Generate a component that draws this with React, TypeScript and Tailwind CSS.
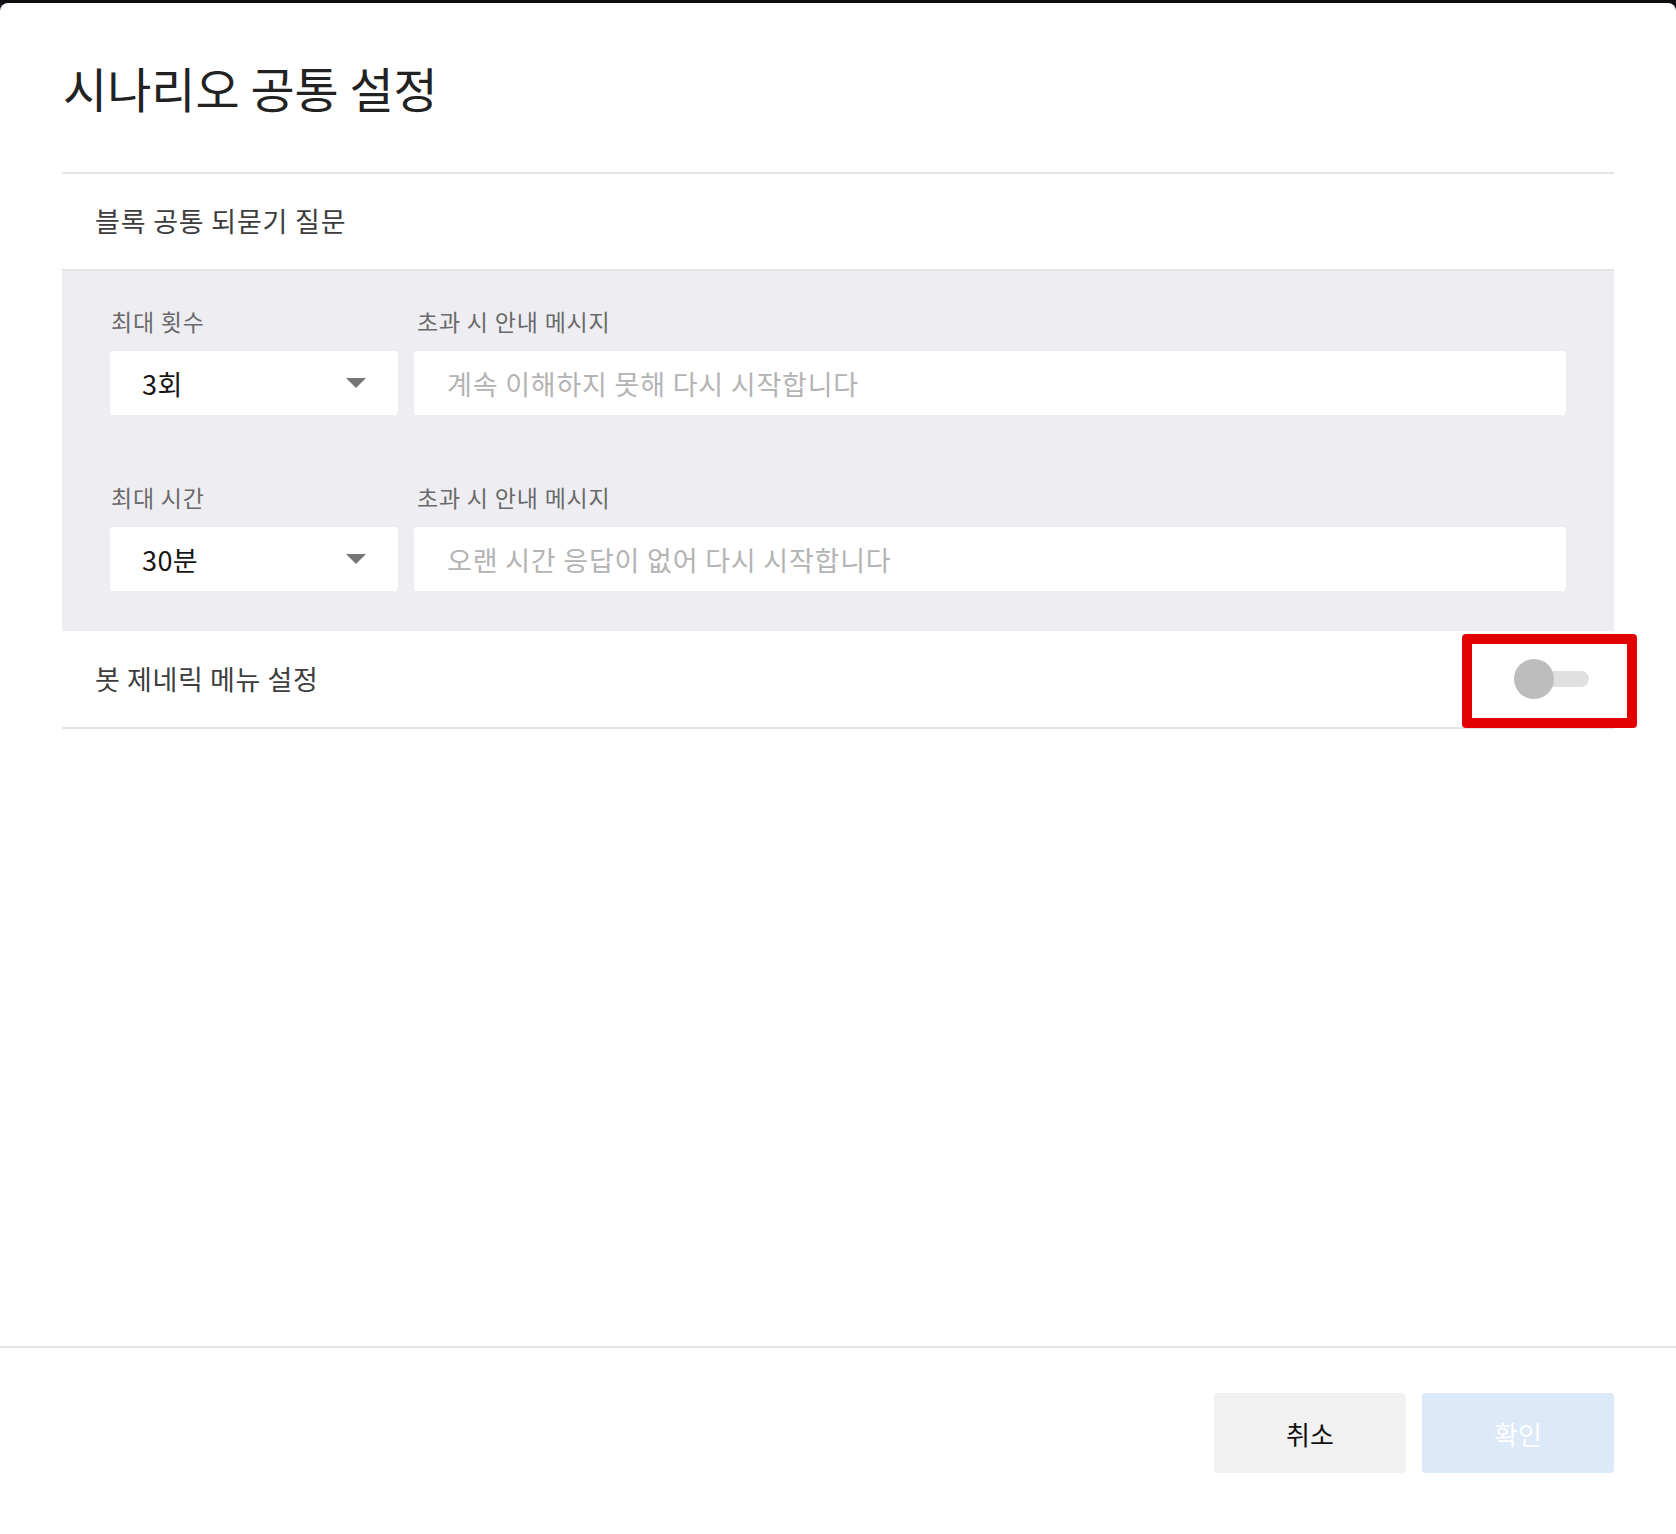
import { useState } from 'react'

function SelectBox({ value }: { value: string }) {
  return (
    <div className="flex h-[64px] items-center justify-between rounded-[4px] bg-white pl-[32px] pr-[32px]">
      <span className="text-[27px] leading-none tracking-[0.4px] text-[#151515]">{value}</span>
      <svg width="20" height="10" viewBox="0 0 20 10" className="block">
        <path d="M0 0 L20 0 L10 10 Z" fill="#767676" />
      </svg>
    </div>
  )
}

function MessageInput({ placeholder }: { placeholder: string }) {
  return (
    <input
      type="text"
      placeholder={placeholder}
      className="h-[64px] w-full rounded-[4px] bg-white pl-[33px] text-[27px] tracking-[0.8px] text-[#222] outline-none placeholder:text-[#b3b3b3]"
    />
  )
}

function LimitRow({ label, value, placeholder }: { label: string; value: string; placeholder: string }) {
  return (
    <div className="grid grid-cols-[288px_1fr] gap-x-[16px]">
      <div className="mb-[14px] pl-[1px] text-[23px] leading-[32px] tracking-[0.8px] text-[#6a6a6a]">{label}</div>
      <div className="mb-[14px] pl-[3px] text-[23px] leading-[32px] tracking-[0.8px] text-[#6a6a6a]">
        초과 시 안내 메시지
      </div>
      <SelectBox value={value} />
      <MessageInput placeholder={placeholder} />
    </div>
  )
}

export default function App() {
  const [menuOn, setMenuOn] = useState(false)

  return (
    <div className="relative min-h-[1534px] bg-[#0d0d12] pt-[3px] font-['Noto_Sans_CJK_KR','Noto_Sans',sans-serif]">
      <div className="flex h-[1531px] flex-col rounded-t-[8px] bg-white">
        <div className="px-[62px]">
          <h1 className="pt-[60px] pb-[61px] pl-[1px] text-[48px] leading-[48px] font-normal text-[#222]">
            시나리오 공통 설정
          </h1>
          <div className="border-t-2 border-[#e5e5e5]">
            <div className="flex h-[95px] items-center pl-[33px] text-[27px] tracking-[0.8px] text-[#3d3d3d]">
              블록 공통 되묻기 질문
            </div>
            <div className="flex flex-col gap-[66px] border-t-2 border-[#e3e3e8] bg-[#eeeef2] px-[48px] pt-[34px] pb-[40px]">
              <LimitRow label="최대 횟수" value="3회" placeholder="계속 이해하지 못해 다시 시작합니다" />
              <LimitRow label="최대 시간" value="30분" placeholder="오랜 시간 응답이 없어 다시 시작합니다" />
            </div>
            <div className="flex h-[98px] items-center justify-between border-b-2 border-[#e5e5e5] pl-[33px] pr-[25px]">
              <span className="text-[27px] tracking-[0.6px] text-[#3d3d3d]">봇 제네릭 메뉴 설정</span>
              <button
                type="button"
                onClick={() => setMenuOn(!menuOn)}
                className="relative h-[40px] w-[75px]"
              >
                <span className="absolute right-0 top-[12px] h-[16px] w-[68px] rounded-full bg-[#e0e0e0]" />
                <span className="absolute left-0 top-0 h-[40px] w-[40px] rounded-full bg-[#bdbdbd]" />
              </button>
            </div>
          </div>
        </div>
        <div className="flex-1" />
        <div className="h-[188px] border-t-2 border-[#e5e5e5] px-[62px] pt-[45px]">
          <div className="flex justify-end gap-[16px]">
            <button
              type="button"
              className="h-[80px] w-[192px] rounded-[4px] bg-[#f1f1f1] text-[26px] text-[#111]"
            >
              취소
            </button>
            <button
              type="button"
              disabled
              className="h-[80px] w-[192px] rounded-[4px] bg-[#dbe9f8] text-[26px] text-white"
            >
              확인
            </button>
          </div>
        </div>
      </div>
      <div className="pointer-events-none absolute left-[1462px] top-[634px] h-[94px] w-[175px] rounded-[4px] border-[10px] border-[#e30000]" />
    </div>
  )
}
